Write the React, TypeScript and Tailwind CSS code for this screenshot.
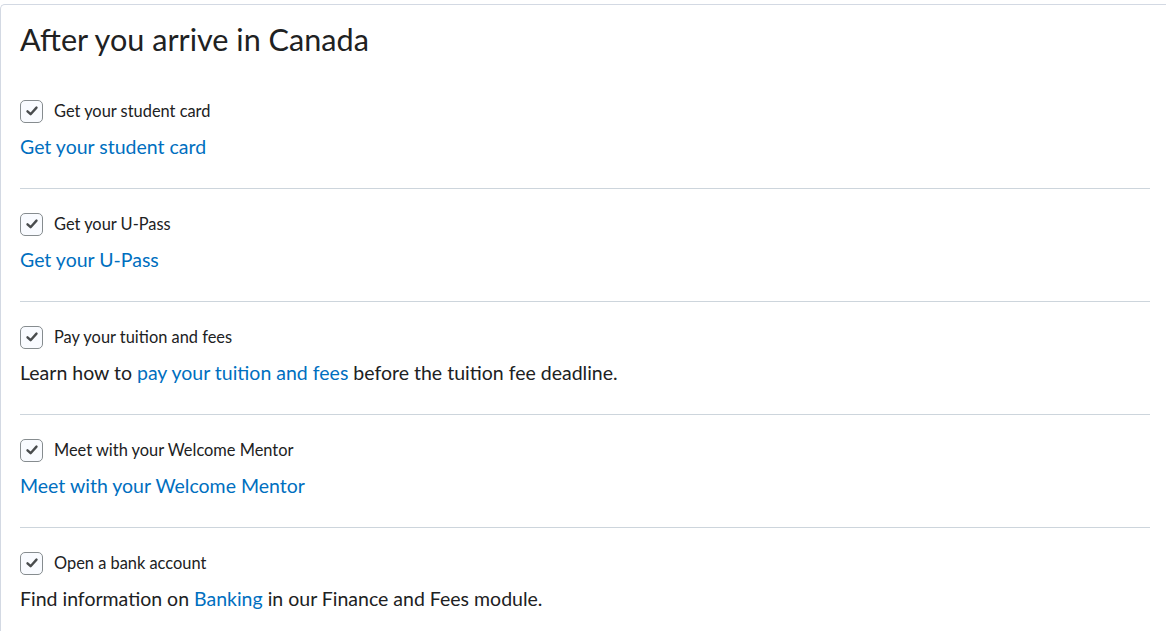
import React from "react";

const items = [
  { label: "Get your student card", body: <a className="text-[#006fbf]">Get your student card</a> },
  { label: "Get your U-Pass", body: <a className="text-[#006fbf]">Get your U-Pass</a> },
  {
    label: "Pay your tuition and fees",
    body: (
      <>
        Learn how to <a className="text-[#006fbf]">pay your tuition and fees</a> before the tuition fee deadline.
      </>
    ),
  },
  {
    label: "Meet with your Welcome Mentor",
    body: <a className="text-[#006fbf]">Meet with your Welcome Mentor</a>,
  },
  {
    label: "Open a bank account",
    body: (
      <>
        Find information on <a className="text-[#006fbf]">Banking</a> in our Finance and Fees module.
      </>
    ),
  },
];

function CheckBox() {
  return (
    <span className="w-[23px] h-[23px] rounded-[5px] border border-[#868c8f] bg-[#f9fbff] flex items-center justify-center shrink-0">
      <svg width="14" height="14" viewBox="0 0 14 14">
        <path d="M2.5 7.3 L5.6 10.2 L11.5 3.6" fill="none" stroke="#494c4e" strokeWidth="2.4" strokeLinecap="round" strokeLinejoin="round" />
      </svg>
    </span>
  );
}

function Item({ label, body, last }: any) {
  return (
    <div>
      <div className="flex items-center gap-[11px] h-[22px]">
        <CheckBox />
        <span className="text-[16.4px] text-[#202122] pt-px">{label}</span>
      </div>
      <div className="mt-[11px] h-[28px] text-[19.5px] leading-[28px] text-[#202122] whitespace-nowrap">{body}</div>
      {!last && <div className="mt-[27px] mb-[24px] h-px bg-[#cdd5dc]" />}
    </div>
  );
}

export default function App() {
  return (
    <div className="bg-white min-h-screen font-['Lato',sans-serif] pt-1">
      <div className="border-t border-l border-[#d3d9e3] rounded-tl-[5px] pl-[19px] pr-4 pb-8">
        <h1 className="mt-[17px] text-[30.6px] leading-9 text-[#202122]">After you arrive in Canada</h1>
        <div className="mt-[42px]">
          {items.map((it, i) => (
            <Item key={i} label={it.label} body={it.body} last={i === items.length - 1} />
          ))}
        </div>
      </div>
    </div>
  );
}
